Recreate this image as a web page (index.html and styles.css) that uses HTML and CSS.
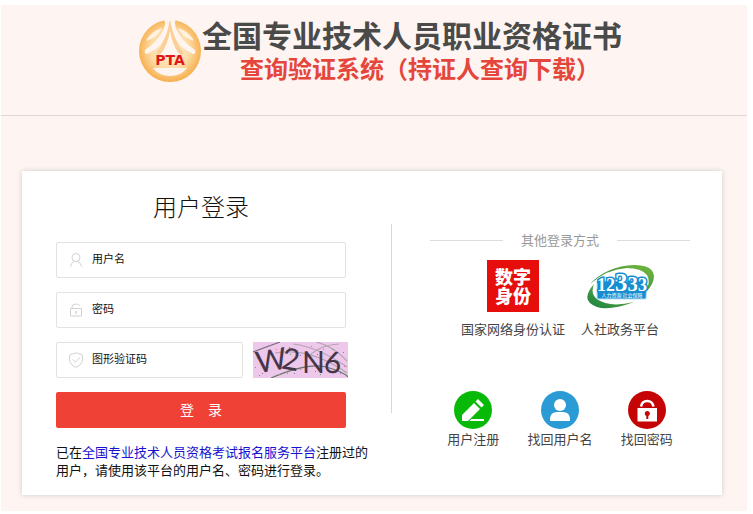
FILE: index.html
```html
<!DOCTYPE html>
<html lang="zh-CN">
<head>
<meta charset="utf-8">
<meta name="viewport" content="width=device-width, initial-scale=1">
<title>全国专业技术人员职业资格证书查询验证系统</title>
<link rel="stylesheet" href="styles.css">
</head>
<body>
<div class="page">
  <header class="header">
    <svg class="brand-logo" viewBox="0 0 64 64" aria-hidden="true">
      <defs>
        <radialGradient id="gold" cx="50%" cy="48%" r="52%">
          <stop offset="0" stop-color="#ffeed6"/>
          <stop offset=".6" stop-color="#fddca6"/>
          <stop offset="1" stop-color="#f6ae4b"/>
        </radialGradient>
      </defs>
      <circle cx="32" cy="32" r="31" fill="url(#gold)"/>
      <path d="M26 0 Q28 4 26 9 Q21 22 7 31 Q6 35 9 35 Q24 29 29 14 L32 2 L35 14 Q40 29 55 35 Q58 35 57 31 Q43 22 38 9 Q36 4 38 0Z" fill="#fff5f0"/>
      <path d="M24 9 Q14 12 9 20 Q8 23 11 21 Q20 18 24 9Z M40 9 Q50 12 55 20 Q56 23 53 21 Q44 18 40 9Z" fill="#fff1df"/>
      <path d="M32 1 Q30 17 18 35 L24 35 Q30 25 32 12 Q34 25 40 35 L46 35 Q34 17 32 1Z" fill="#fbcf98"/>
      <path d="M32 12 Q30 26 22 36 H42 Q34 26 32 12Z" fill="#fff6f0"/>
      <path d="M15 49 H49 Q43 57 32 57 Q21 57 15 49Z" fill="#fff5f0"/>
      <text class="brand-letters" x="32" y="46" text-anchor="middle">PTA</text>
    </svg>
    <div class="brand-text">
      <h1 class="brand-title">全国专业技术人员职业资格证书</h1>
      <p class="brand-subtitle">查询验证系统（持证人查询下载）</p>
    </div>
  </header>

  <main class="card">
    <section class="login">
      <form class="form">
        <h2 class="login-title">用户登录</h2>
        <label class="field">
          <svg class="field-icon" viewBox="0 0 16 16" aria-hidden="true"><circle cx="8" cy="5.5" r="4"/><path d="M2.5 14.5 Q3 11 6 9.2 M9 9.5 Q13 10.5 13.8 14.5"/></svg>
          <input type="text" name="username" placeholder="用户名" aria-label="用户名">
        </label>
        <label class="field">
          <svg class="field-icon" viewBox="0 0 16 16" aria-hidden="true"><path d="M2.5 6.5 H13.5 V14 H2.5Z M4 6.5 V5 Q4 2 8 2 Q11 2 12 4 M8 9 V12.5 M7 10 H9"/></svg>
          <input type="password" name="password" placeholder="密码" aria-label="密码">
        </label>
        <div class="captcha-row">
          <label class="field">
            <svg class="field-icon" viewBox="0 0 16 16" aria-hidden="true"><path d="M8 .8 L14.5 3 V8 Q14 13 8 15.3 Q2 13 1.5 8 V3Z M4.5 7.5 L7.3 10 L12 5.5"/></svg>
            <input type="text" name="captcha" placeholder="图形验证码" aria-label="图形验证码">
          </label>
          <svg class="captcha" viewBox="0 0 95 36" role="img" aria-label="W2N6">
            <rect width="95" height="36" fill="#edc8eb"/>
            <g fill="none" stroke="#b5a3b0" stroke-width="1.2">
              <path d="M0 10 Q16 4 27 0" stroke="#776a7c"/>
              <path d="M40 2 Q65 5 94 25 M63 0 Q80 4 94 19 M22 11 Q57 5 94 31 M52 18 Q65 3 86 2"/>
              <path d="M18 36 Q55 20 73 25 T95 35" stroke="#667469"/>
            </g>
            <g class="captcha-letters">
              <text x="3" y="29" transform="rotate(-10 18 20)">W</text>
              <text x="29" y="28" transform="rotate(10 38 18)">2</text>
              <text x="49" y="31">N</text>
              <text x="71" y="31" transform="rotate(5 80 22)">6</text>
            </g>
            <g fill="#9270b4">
              <path d="M4 16h1v1H4z M12 5h1v1h-1z M36 5h1v1h-1z M47 13h1v1h-1z M64 12h1v1h-1z M62 29h1v1h-1z M90 10h1v1h-1z M9 31h1v1H9z M41 31h1v1h-1z M87 31h1v1h-1z"/>
            </g>
            <g fill="#e06f91">
              <path d="M23 7h1v1h-1z M2 25h1v1H2z M44 8h1v1h-1z M58 4h1v1h-1z M34 31h1v1h-1z M70 7h1v1h-1z M91 24h1v1h-1z M47 27h1v1h-1z"/>
            </g>
            <g fill="#67a66f">
              <path d="M15 25h1v1h-1z M6 33h1v1H6z M37 12h1v1h-1z M52 9h1v1h-1z M67 32h1v1h-1z M79 7h1v1h-1z M26 32h1v1h-1z"/>
            </g>
          </svg>
        </div>
        <button class="submit" type="submit">登&emsp;录</button>
      </form>
      <p class="note">已在<a href="#">全国专业技术人员资格考试报名服务平台</a>注册过的用户，请使用该平台的用户名、密码进行登录。</p>
    </section>

    <div class="divider"></div>

    <section class="other">
      <h3 class="other-title">其他登录方式</h3>
      <div class="providers">
        <a class="item" href="#">
          <span class="digital-id">数字身份</span>
          <span>国家网络身份认证</span>
        </a>
        <a class="item" href="#">
          <svg class="hotline" viewBox="0 0 70 52" aria-hidden="true">
            <defs>
              <linearGradient id="green" x1="0" y1="1" x2="1" y2="0">
                <stop offset="0" stop-color="#178044"/>
                <stop offset="1" stop-color="#78b83c"/>
              </linearGradient>
            </defs>
            <path fill="url(#green)" d="M5 24 Q22 6 49 5 Q68 5 69 16 Q69 24 61 32 Q66 21 62 15 Q56 8 42 8 Q22 9 5 24Z"/>
            <path fill="url(#green)" d="M9 24 Q-2 37 5 43 Q17 54 49 42 Q24 48 12 39 Q5 34 9 24Z"/>
            <path fill="#168dd0" stroke="#b9e3f7" d="M12 21 H62 L61 39 H12Z"/>
            <text class="hotline-number" x="12" y="31"><tspan font-size="18">12</tspan><tspan font-size="25">3</tspan><tspan font-size="21">3</tspan><tspan font-size="18">3</tspan></text>
            <text class="hotline-caption" x="37" y="37" text-anchor="middle">人力资源 社会保障</text>
          </svg>
          <span>人社政务平台</span>
        </a>
      </div>
      <nav class="actions">
        <a class="item" href="#">
          <svg class="action-icon" viewBox="0 0 38 38" aria-hidden="true"><circle cx="19" cy="19" r="19" fill="#08b908"/><path fill="#fff" d="M8 24 L20 12 L26 18 L14 30 H8Z M21.5 10.5 L24 8 L30 14 L27.5 16.5Z M17.5 28 H30 V30 H15.5Z"/></svg>
          <span>用户注册</span>
        </a>
        <a class="item" href="#">
          <svg class="action-icon" viewBox="0 0 38 38" aria-hidden="true"><circle cx="19" cy="19" r="19" fill="#2b9bd5"/><circle cx="19" cy="14" r="6" fill="#fff"/><path fill="#fff" d="M9 30 V27 Q10 21 16 21 H22 Q28 21 29 27 V30Z"/></svg>
          <span>找回用户名</span>
        </a>
        <a class="item" href="#">
          <svg class="action-icon" viewBox="0 0 38 38" aria-hidden="true"><circle cx="19" cy="19" r="19" fill="#c50505"/><path fill="#fff" d="M9.5 17 H29 V30.5 H9.5Z"/><path fill="none" stroke="#fff" stroke-width="2.6" d="M13 15.5 Q14 10 19.2 10 T25.5 15.5"/><circle cx="19.3" cy="22.5" r="2.5" fill="#c50505"/><path stroke="#c50505" stroke-width="2" d="M19.3 23 V28"/></svg>
          <span>找回密码</span>
        </a>
      </nav>
    </section>
  </main>
</div>
</body>
</html>
```
FILE: styles.css
```css
* {
  box-sizing: border-box;
}

body {
  margin: 0;
  padding: 5px 6px 3px 1px;
  background: #fff;
  color: #111;
  font: 13px/18px "Noto Sans CJK SC", sans-serif;
}

h1, h2, h3, p {
  margin: 0;
}

a {
  text-decoration: none;
}

.page {
  background: #fef4f1;
  padding-bottom: 16px;
}

.header {
  display: flex;
  align-items: center;
  justify-content: center;
  padding: 12px 0 30px 12px;
  border-bottom: 1px solid #ddd7d5;
}

.brand-logo {
  flex: none;
  width: 64px;
  height: 64px;
}

.brand-letters {
  font: bold 14px "DejaVu Sans", sans-serif;
  fill: #df1717;
}

.brand-title {
  font-size: 30px;
  line-height: 34px;
  color: #4a4a49;
}

.brand-subtitle {
  padding-left: 38px;
  font-size: 24px;
  line-height: 34px;
  font-weight: bold;
  color: #e5463c;
}

.card {
  display: flex;
  margin: 55px 25px 0 21px;
  background: #fff;
  box-shadow: 0 0 5px #ccc;
}

.login {
  flex: 0 1 369px;
  padding: 18px 16px 16px 34px;
}

.form {
  display: flex;
  flex-direction: column;
  gap: 14px;
  max-width: 290px;
}

.login-title {
  margin-bottom: 3px;
  font-size: 24px;
  line-height: 34px;
  padding-bottom: 2px;
  font-weight: 300;
  text-align: center;
}

.field {
  display: flex;
  flex: 1;
  align-items: center;
  gap: 8px;
  min-width: 0;
  height: 36px;
  padding: 0 11px;
  border: 1px solid #e2e2e2;
  border-radius: 2px;
}

.form > .field {
  flex: none;
}

.field-icon {
  flex: none;
  width: 16px;
  height: 16px;
  fill: none;
  stroke: #d2d2d2;
}

.field input {
  flex: 1;
  min-width: 0;
  padding: 0 0 4px;
  border: 0;
  outline: 0;
  background: none;
  font: 11px/18px "Noto Sans CJK SC", sans-serif;
}

.field input::placeholder {
  color: #111;
  opacity: 1;
}

.captcha-row {
  display: flex;
  gap: 10px;
  margin-right: -2px;
}

.captcha {
  flex: none;
  width: 95px;
  height: 36px;
}

.captcha-letters {
  font: 30px Lato, sans-serif;
  fill: #463548;
}

.submit {
  height: 36px;
  padding: 0 0 2px;
  border: 0;
  border-radius: 2px;
  background: #ef4136;
  color: #fff;
  font: 14px/18px "Noto Sans CJK SC", sans-serif;
}

.note {
  margin-top: 15px;
}

.note a {
  color: #1712d0;
}

.divider {
  width: 1px;
  margin: 53px 0 82px;
  background: #d8d8d8;
}

.other {
  flex: 1;
  padding: 59px 32px 16px 38px;
}

.other-title {
  display: flex;
  align-items: center;
  gap: 18px;
  font-size: 13px;
  line-height: 20px;
  font-weight: 400;
  color: #999;
}

.other-title::before,
.other-title::after {
  flex: 1;
  height: 1px;
  background: #ddd;
  content: "";
}

.providers {
  display: flex;
  justify-content: center;
  gap: 16px;
  margin-top: 10px;
}

.item {
  display: flex;
  flex-direction: column;
  align-items: center;
  color: #444;
  line-height: 20px;
}

.providers .item {
  gap: 7px;
}

.digital-id {
  width: 52px;
  height: 52px;
  padding: 7px 8px;
  background: #e60d0d;
  color: #fff;
  font-size: 18px;
  line-height: 19px;
  font-weight: 900;
}

.hotline {
  width: 70px;
  height: 52px;
}

.hotline-number {
  font-family: "Liberation Serif", serif;
  font-weight: bold;
  fill: #fff;
  stroke: #168dd0;
  stroke-width: 3px;
  paint-order: stroke;
}

.hotline-caption {
  font-size: 5px;
  fill: #fff;
}

.actions {
  display: grid;
  grid-template-columns: repeat(3, 1fr);
  margin-top: 52px;
}

.action-icon {
  width: 38px;
  height: 38px;
}
```
